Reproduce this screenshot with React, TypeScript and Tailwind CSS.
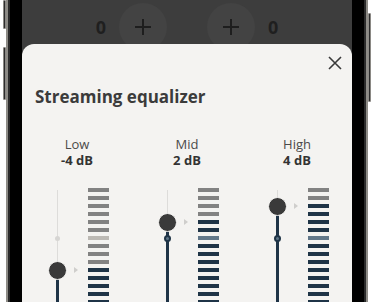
import React from 'react'

const font = { fontFamily: '"Open Sans", "Noto Sans", sans-serif' }

const SEGMENTS = 15
const ZERO_IDX = 6

interface Band {
  name: string
  db: number
}

const bands: Band[] = [
  { name: 'Low', db: -4 },
  { name: 'Mid', db: 2 },
  { name: 'High', db: 4 },
]

function SideButton({ h, className }: { h: string; className?: string }) {
  return (
    <div
      className={`${h} ${className ?? ''} w-[3px] rounded-[1px] border border-[#8a8884] bg-[#2c2c2c]`}
    />
  )
}

function Meter({ level }: { level: number }) {
  return (
    <div className="flex w-[21px] flex-col gap-[4px]">
      {Array.from({ length: SEGMENTS }).map((_, i) => {
        const active = i >= level
        const zero = i === ZERO_IDX
        let color = 'bg-[#828282]'
        if (active) color = zero ? 'bg-[#62788a]' : 'bg-[#1f3447]'
        else if (zero) color = 'bg-[#bcb9b4]'
        return <div key={i} className={`h-[4px] w-full ${color}`} />
      })}
    </div>
  )
}

function Slider({ level }: { level: number }) {
  const knobY = level * 8 + 2
  const zeroY = ZERO_IDX * 8 + 2
  const zeroBelow = zeroY > knobY
  return (
    <div className="relative h-[120px] w-[18px]">
      {/* thin line above knob */}
      <div
        className="absolute left-[8.5px] top-[2px] w-px bg-[#dddcda]"
        style={{ height: Math.max(knobY - 2, 0) }}
      />
      {/* filled line below knob */}
      <div
        className="absolute bottom-0 left-[7.5px] w-[3px] bg-[#1f3447]"
        style={{ top: knobY }}
      />
      {zeroBelow ? (
        <div
          className="absolute left-[5.5px] h-[7px] w-[7px] rounded-full border-2 border-[#1f3447] bg-[#5f7788]"
          style={{ top: zeroY - 3.5 }}
        />
      ) : (
        <div
          className="absolute left-[6.5px] h-[5px] w-[5px] rounded-full bg-[#d6d5d3]"
          style={{ top: zeroY - 2.5 }}
        />
      )}
      <div
        className="absolute left-[-0.5px] h-[19px] w-[19px] rounded-full border-[1.5px] border-[#f4f3f1] bg-[#3a3a3a]"
        style={{ top: knobY - 9.5 }}
      />
    </div>
  )
}

function BandColumn({ band }: { band: Band }) {
  const level = ZERO_IDX - band.db
  const knobY = level * 8 + 2
  return (
    <div className="flex w-[110px] flex-col">
      <div className="flex flex-col items-center text-[13px] leading-[16px]">
        <span className="text-[#4a4a4a]">{band.name}</span>
        <span className="font-bold text-[#333333]">{band.db} dB</span>
      </div>
      <div className="mt-[20px] flex pl-[26px]">
        <Slider level={level} />
        <div className="relative ml-[8px] w-[4px]">
          <div
            className="absolute left-0 h-0 w-0 border-y-[3px] border-l-[4px] border-y-transparent border-l-[#cfcecc]"
            style={{ top: knobY - 3 }}
          />
        </div>
        <div className="ml-[10px]">
          <Meter level={level} />
        </div>
      </div>
    </div>
  )
}

function PlusCircle() {
  return (
    <div className="flex h-[48px] w-[48px] items-center justify-center rounded-full bg-[#434343]">
      <svg width="18" height="18" viewBox="0 0 18 18">
        <path d="M9 1v16M1 9h16" stroke="#1e1e1e" strokeWidth="2" />
      </svg>
    </div>
  )
}

export default function App() {
  return (
    <div className="flex h-[302px] w-[375px] items-start overflow-hidden bg-white" style={font}>
      <div className="ml-[3px] flex flex-col">
        <SideButton h="h-[29px]" />
        <SideButton h="h-[53px]" className="mt-[18px]" />
      </div>

      <div className="h-full w-[362px] border-x-2 border-[#8e8c87]">
        <div className="h-full border-x-2 border-[#2b2b2b] bg-black px-[12px]">
          <div className="flex h-full w-[330px] flex-col bg-[#3d3d3d]">
            <div className="h-[44px] shrink-0 overflow-hidden">
              <div className="flex items-center justify-center gap-[13px] pt-[3px] text-[18px] font-bold text-[#1f1f1f]">
                <span>0</span>
                <PlusCircle />
                <div className="w-[14px]" />
                <PlusCircle />
                <span>0</span>
              </div>
            </div>

            <div className="flex min-h-0 flex-1 flex-col rounded-t-[12px] bg-[#f4f3f1]">
              <div className="flex justify-end pt-[12px] pr-[10px]">
                <svg width="14" height="14" viewBox="0 0 14 14">
                  <path d="M1 1l12 12M13 1L1 13" stroke="#3a3a3a" strokeWidth="1.6" />
                </svg>
              </div>
              <h2 className="mt-[15px] pl-[13px] text-[17px] leading-[24px] font-bold text-[#3b3b3b]">
                Streaming equalizer
              </h2>
              <div className="mt-[27px] flex">
                {bands.map((b) => (
                  <BandColumn key={b.name} band={b} />
                ))}
              </div>
            </div>
          </div>
        </div>
      </div>

      <div className="mt-[13px] flex flex-col">
        <SideButton h="h-[89px]" />
      </div>
    </div>
  )
}
